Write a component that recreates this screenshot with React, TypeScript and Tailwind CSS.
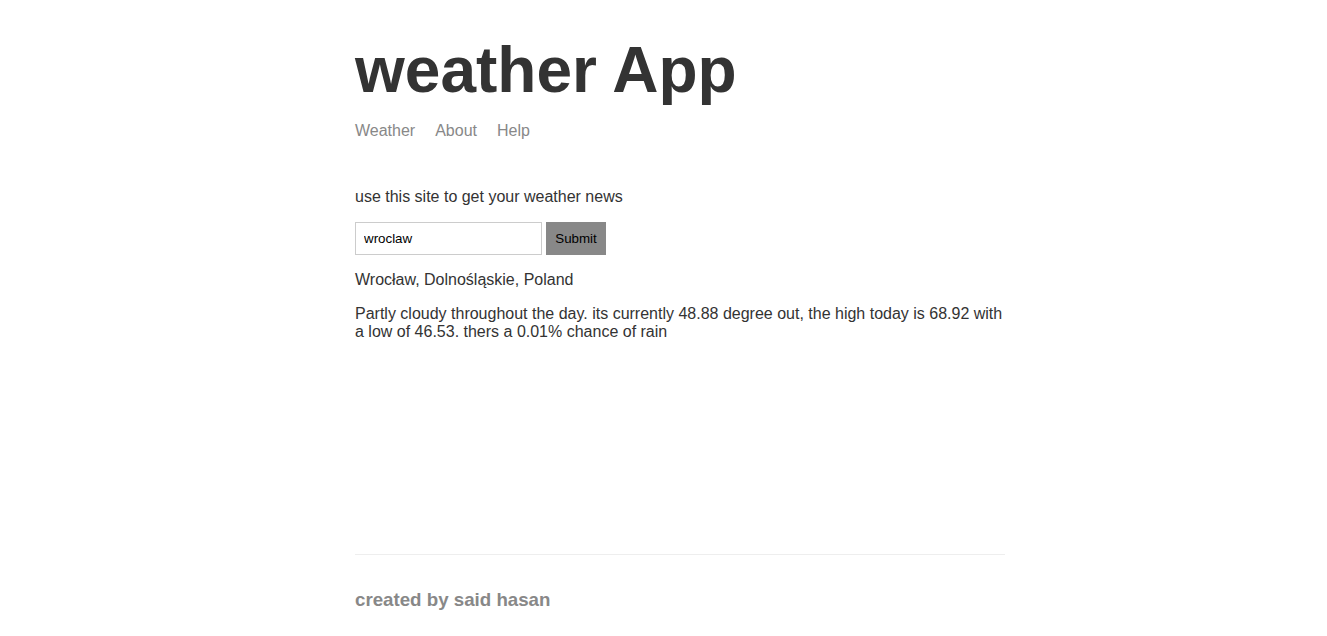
export default function App() {
  return (
    <div className="h-[636px] flex flex-col pl-[355px] bg-white text-[#333] font-['Liberation_Sans',Arial,sans-serif] overflow-hidden">
      <div className="w-[650px] flex-1">
        <header className="pt-[33px]">
          <h1 className="text-[64px] leading-[74px] font-bold">weather App</h1>
          <nav className="mt-[15px] flex gap-5 text-base leading-[18px] text-[#888]">
            <a href="#">Weather</a>
            <a href="#">About</a>
            <a href="#">Help</a>
          </nav>
        </header>

        <main>
          <p className="mt-[48px] text-base leading-[18px]">use this site to get your weather news</p>
          <form className="mt-[16px] flex items-stretch gap-1" onSubmit={(e) => e.preventDefault()}>
            <input
              defaultValue="wroclaw"
              className="w-[187px] h-[33px] border border-[#ccc] px-2 text-[13.33px] text-black outline-none"
            />
            <button
              type="submit"
              className="w-[60px] h-[33px] border border-[#888] bg-[#888] text-[13.33px] text-black"
            >
              Submit
            </button>
          </form>
          <p className="mt-[16px] text-base leading-[18.4px]">Wrocław, Dolnośląskie, Poland</p>
          <p className="mt-4 text-base leading-[18px]">
            Partly cloudy throughout the day. its currently 48.88 degree out, the high today is 68.92 with a low of 46.53. thers a 0.01% chance of rain
          </p>
        </main>
      </div>

      <footer className="w-[650px] border-t border-[#eee] pt-[34px] pb-[26px]">
        <h3 className="text-[18.72px] leading-[21.5px] font-bold text-[#888]">created by said hasan</h3>
      </footer>
    </div>
  );
}
